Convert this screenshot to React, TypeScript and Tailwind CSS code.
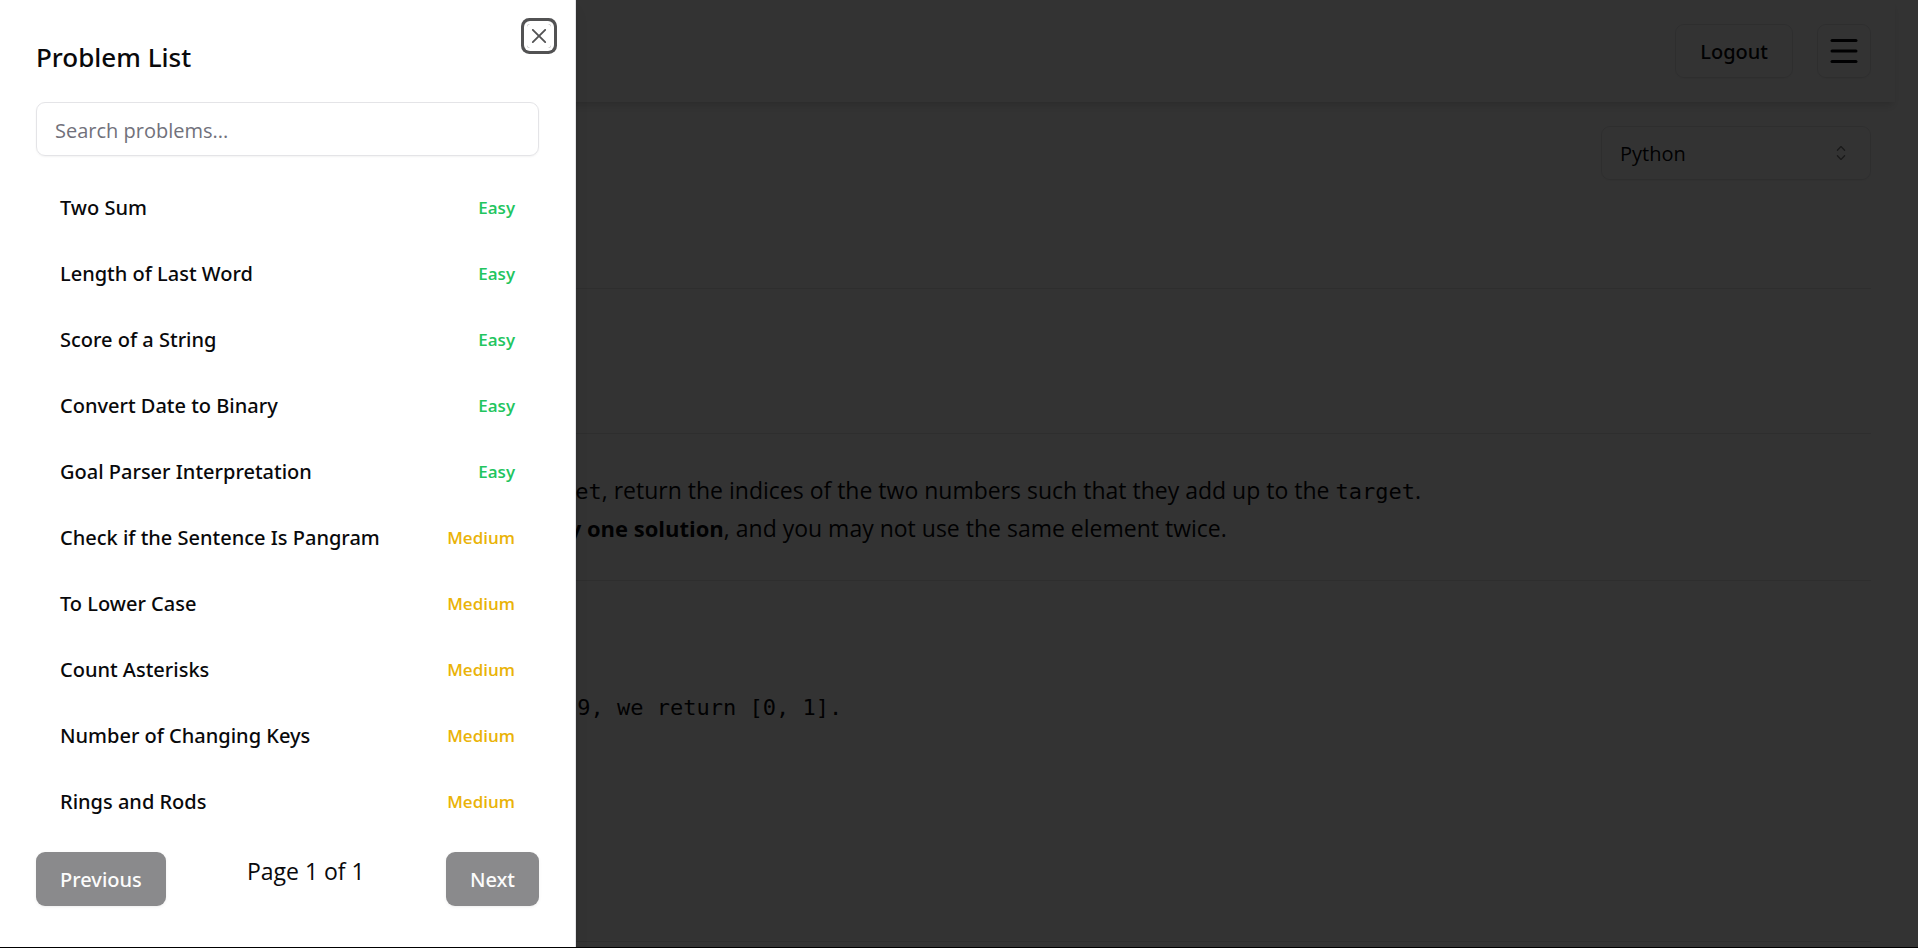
import { Menu } from "lucide-react";

type Difficulty = "Easy" | "Medium";

const problems: { title: string; difficulty: Difficulty }[] = [
  { title: "Two Sum", difficulty: "Easy" },
  { title: "Length of Last Word", difficulty: "Easy" },
  { title: "Score of a String", difficulty: "Easy" },
  { title: "Convert Date to Binary", difficulty: "Easy" },
  { title: "Goal Parser Interpretation", difficulty: "Easy" },
  { title: "Check if the Sentence Is Pangram", difficulty: "Medium" },
  { title: "To Lower Case", difficulty: "Medium" },
  { title: "Count Asterisks", difficulty: "Medium" },
  { title: "Number of Changing Keys", difficulty: "Medium" },
  { title: "Rings and Rods", difficulty: "Medium" },
];

const difficultyColor: Record<Difficulty, string> = {
  Easy: "text-[#22c55e]",
  Medium: "text-[#eab308]",
};

function CrossIcon() {
  return (
    <svg viewBox="0 0 15 15" className="size-6" fill="currentColor" aria-hidden="true">
      <path
        fillRule="evenodd"
        clipRule="evenodd"
        d="M11.7816 4.03157C12.0062 3.80702 12.0062 3.44295 11.7816 3.2184C11.5571 2.99385 11.193 2.99385 10.9685 3.2184L7.50005 6.68682L4.03164 3.2184C3.80708 2.99385 3.44301 2.99385 3.21846 3.2184C2.99391 3.44295 2.99391 3.80702 3.21846 4.03157L6.68688 7.49999L3.21846 10.9684C2.99391 11.193 2.99391 11.557 3.21846 11.7816C3.44301 12.0061 3.80708 12.0061 4.03164 11.7816L7.50005 8.31316L10.9685 11.7816C11.193 12.0061 11.5571 12.0061 11.7816 11.7816C12.0062 11.557 12.0062 11.193 11.7816 10.9684L8.31322 7.49999L11.7816 4.03157Z"
      />
    </svg>
  );
}

function CaretSortIcon() {
  return (
    <svg viewBox="0 0 15 15" className="size-6" fill="currentColor" aria-hidden="true">
      <path
        fillRule="evenodd"
        clipRule="evenodd"
        d="M4.93179 5.43179C4.75605 5.60753 4.75605 5.89245 4.93179 6.06819C5.10753 6.24392 5.39245 6.24392 5.56819 6.06819L7.49999 4.13638L9.43179 6.06819C9.60753 6.24392 9.89245 6.24392 10.0682 6.06819C10.2439 5.89245 10.2439 5.60753 10.0682 5.43179L7.81819 3.18179C7.73379 3.0974 7.61933 3.04999 7.49999 3.04999C7.38064 3.04999 7.26618 3.0974 7.18179 3.18179L4.93179 5.43179ZM10.0682 9.56819C10.2439 9.39245 10.2439 9.10753 10.0682 8.93179C9.89245 8.75606 9.60753 8.75606 9.43179 8.93179L7.49999 10.8636L5.56819 8.93179C5.39245 8.75606 5.10753 8.75606 4.93179 8.93179C4.75605 9.10753 4.75605 9.39245 4.93179 9.56819L7.18179 11.8182C7.35753 11.9939 7.64245 11.9939 7.81819 11.8182L10.0682 9.56819Z"
      />
    </svg>
  );
}

function ProblemPage() {
  return (
    <div className="mr-[23px]">
      <header className="flex h-[102px] items-center justify-end gap-6 bg-white px-6 shadow-[0_6px_9px_-1px_rgb(0_0_0/0.1),0_3px_6px_-3px_rgb(0_0_0/0.1)]">
        <button
          type="button"
          className="h-[54px] rounded-[9px] border border-zinc-200 px-6 pt-0.5 font-['Noto_Sans',sans-serif] text-[20px] font-medium shadow-xs"
        >
          Logout
        </button>
        <button
          type="button"
          aria-label="Open menu"
          className="flex size-[54px] items-center justify-center rounded-[9px] border border-zinc-200 shadow-xs"
        >
          <Menu size={36} />
        </button>
      </header>

      <main className="pt-6 pr-6">
        <section className="h-[163px] border-b border-zinc-200">
          <div className="relative ml-auto w-[270px]">
            <select
              aria-label="Language"
              className="h-[54px] w-full appearance-none rounded-[9px] border border-zinc-200 bg-transparent px-[18px] pt-0.5 text-[20px] shadow-xs"
            >
              <option>Python</option>
            </select>
            <span className="pointer-events-none absolute inset-y-0 right-[18px] flex items-center opacity-50">
              <CaretSortIcon />
            </span>
          </div>
        </section>

        <section className="h-[145px] border-b border-zinc-200" />

        <section className="border-b border-zinc-200 pt-[37px] pb-[33px] pl-[562px]">
          <p className="text-[23px] leading-[38px]">
            <code className="font-['DejaVu_Sans_Mono',monospace] text-[22px] leading-none">get</code>, return the
            indices of the two numbers such that they add up to the{" "}
            <code className="font-['DejaVu_Sans_Mono',monospace] text-[22px] leading-none">target</code>.
            <br />
            <strong className="text-[22px] leading-none">ly one solution</strong>, and you may not use the same
            element twice.
          </p>
        </section>

        <section className="border-b border-zinc-200 pt-[109px] pb-[215px] pl-[564px]">
          <pre className="font-['DejaVu_Sans_Mono',monospace] text-[22px] leading-9">
            {" 9, we return [0, 1]."}
          </pre>
        </section>
      </main>
    </div>
  );
}

function ProblemDrawer() {
  return (
    <aside
      role="dialog"
      aria-labelledby="drawer-title"
      className="absolute inset-y-0 left-0 flex w-[576px] max-w-full flex-col gap-6 overflow-y-auto border-r border-zinc-200 bg-white p-9 shadow-lg"
    >
      <h2
        id="drawer-title"
        className="font-['Noto_Sans',sans-serif] text-[26px] leading-[42px] font-medium"
      >
        Problem List
      </h2>
      <button
        type="button"
        aria-label="Close"
        className="absolute top-6 right-6 rounded-[3px] opacity-70 ring-[3px] ring-zinc-950 ring-offset-[3px] ring-offset-white"
      >
        <CrossIcon />
      </button>

      <input
        type="search"
        aria-label="Search problems"
        placeholder="Search problems..."
        className="h-[54px] w-full shrink-0 rounded-[9px] border border-zinc-200 px-[18px] pt-0.5 text-[20px] shadow-xs placeholder:text-zinc-500"
      />

      <ul className="flex flex-col gap-3">
        {problems.map((problem) => (
          <li key={problem.title}>
            <button
              type="button"
              className="flex h-[54px] w-full items-center justify-between rounded-[9px] px-6 pt-0.5 font-['Noto_Sans',sans-serif] text-[20px] font-medium"
            >
              <span>{problem.title}</span>
              <span
                className={`font-['Open_Sans',sans-serif] text-[17px] font-semibold ${difficultyColor[problem.difficulty]}`}
              >
                {problem.difficulty}
              </span>
            </button>
          </li>
        ))}
      </ul>

      <div className="flex items-start justify-between">
        <button
          type="button"
          disabled
          className="h-[54px] rounded-[9px] bg-zinc-900 px-6 pt-0.5 font-['Noto_Sans',sans-serif] text-[20px] font-medium text-zinc-50 opacity-50 shadow-sm"
        >
          Previous
        </button>
        <span className="text-[23px] leading-[38px]">Page 1 of 1</span>
        <button
          type="button"
          disabled
          className="h-[54px] rounded-[9px] bg-zinc-900 px-6 pt-0.5 font-['Noto_Sans',sans-serif] text-[20px] font-medium text-zinc-50 opacity-50 shadow-sm"
        >
          Next
        </button>
      </div>
    </aside>
  );
}

export default function App() {
  return (
    <div className="h-screen border-b border-black bg-white font-['Open_Sans','Noto_Sans',sans-serif] text-zinc-950">
      <div className="relative h-full overflow-hidden">
        <ProblemPage />
        <div className="absolute inset-0 bg-black/80" />
        <ProblemDrawer />
      </div>
    </div>
  );
}
